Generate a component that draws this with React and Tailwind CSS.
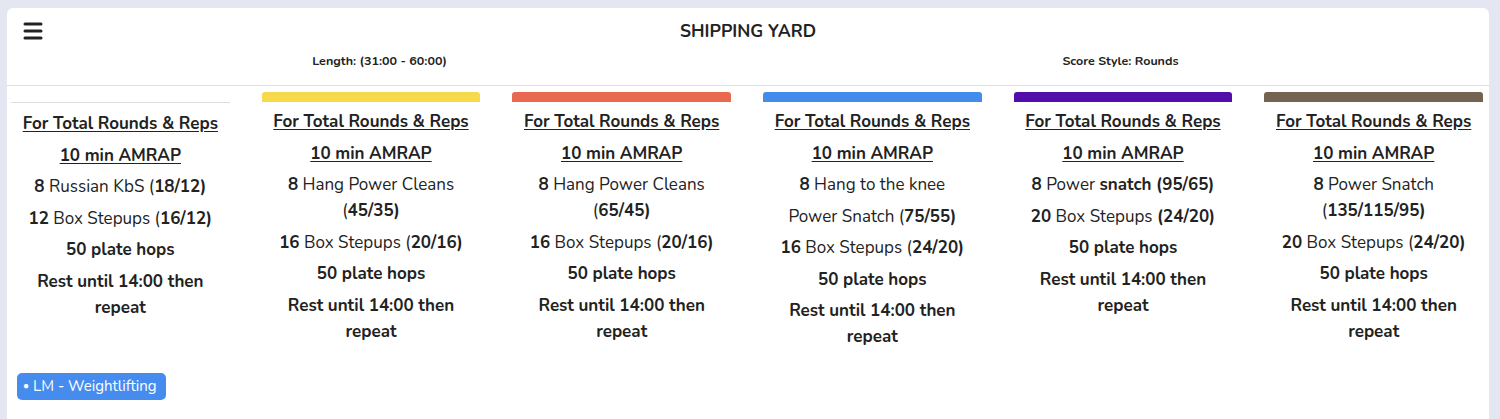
import { Menu } from "lucide-react";

const columns = [
  {
    bar: null,
    lines: [
      [[["8", true], [" Russian KbS (", false], ["18/12", true], [")", true]]],
      [[["12", true], [" Box Stepups (", false], ["16/12", true], [")", true]]],
      [[["50 plate hops", true]]],
      [[["Rest until 14:00 then repeat", true]]],
    ],
  },
  {
    bar: "bg-[#f7d94c]",
    lines: [
      [[["8", true], [" Hang Power Cleans (", false], ["45/35", true], [")", true]]],
      [[["16", true], [" Box Stepups (", false], ["20/16", true], [")", true]]],
      [[["50 plate hops", true]]],
      [[["Rest until 14:00 then repeat", true]]],
    ],
  },
  {
    bar: "bg-[#e8694f]",
    lines: [
      [[["8", true], [" Hang Power Cleans (", false], ["65/45", true], [")", true]]],
      [[["16", true], [" Box Stepups (", false], ["20/16", true], [")", true]]],
      [[["50 plate hops", true]]],
      [[["Rest until 14:00 then repeat", true]]],
    ],
  },
  {
    bar: "bg-[#428cec]",
    lines: [
      [[["8", true], [" Hang to the knee", false]]],
      [[[" Power Snatch (", false], ["75/55", true], [")", true]]],
      [[["16", true], [" Box Stepups (", false], ["24/20", true], [")", true]]],
      [[["50 plate hops", true]]],
      [[["Rest until 14:00 then repeat", true]]],
    ],
  },
  {
    bar: "bg-[#520dab]",
    lines: [
      [[["8", true], [" Power ", false], ["snatch (95/65)", true]]],
      [[["20", true], [" Box Stepups ", false], ["(24/20)", true]]],
      [[["50 plate hops", true]]],
      [[["Rest until 14:00 then repeat", true]]],
    ],
  },
  {
    bar: "bg-[#736350]",
    lines: [
      [[["8", true], [" Power Snatch (", false], ["135/115/95", true], [")", true]]],
      [[["20", true], [" Box Stepups (", false], ["24/20", true], [")", true]]],
      [[["50 plate hops", true]]],
      [[["Rest until 14:00 then repeat", true]]],
    ],
  },
];

function Column({ col }) {
  return (
    <div className="flex flex-col">
      {col.bar ? (
        <div className={`h-[10px] rounded-t-[3px] ${col.bar}`} />
      ) : (
        <div className="mt-[10px] h-px bg-[#dcdde3]" />
      )}
      <div className={`text-center text-[17px] leading-[26px] text-[#222] px-1 ${col.bar ? "pt-[7px]" : "pt-[8px]"}`}>
        <p className="font-bold underline underline-offset-2 mb-[5.5px]">For Total Rounds &amp; Reps</p>
        <p className="font-bold underline underline-offset-2 mb-[5.5px]">10 min AMRAP</p>
        {col.lines.map((line, i) => (
          <p key={i} className="mb-[5.5px]">
            {line[0].map(([t, b], j) => (
              <span key={j} className={b ? "font-bold" : "font-normal"}>
                {t}
              </span>
            ))}
          </p>
        ))}
      </div>
    </div>
  );
}

export default function App() {
  return (
    <div
      className="min-h-screen bg-[#e4e6f1] pt-2 pl-[7px] pr-[11px]"
      style={{ fontFamily: '"Nunito", "Open Sans", sans-serif' }}
    >
      <div className="bg-white rounded-t-[6px] min-h-[411px] flex flex-col">
        <header className="relative border-b border-[#dcdfe8]">
          <button className="absolute left-[14px] top-[11px] text-[#222]">
            <Menu size={24} strokeWidth={3} />
          </button>
          <h1 className="text-center font-bold text-[17.5px] text-[#222] pt-[12px] leading-[22px]">
            SHIPPING YARD
          </h1>
          <div className="grid grid-cols-2 pt-[11px] pb-[16px]">
            <p className="text-center font-bold text-[12.5px] leading-[16px] text-[#222] pl-1">
              Length: (31:00 - 60:00)
            </p>
            <p className="text-center font-bold text-[12.5px] leading-[16px] text-[#222] pl-1">
              Score Style: Rounds
            </p>
          </div>
        </header>
        <div className="grid grid-cols-6 gap-x-[32px] pl-[4px] pr-[6px] pt-[6px]">
          {columns.map((col, i) => (
            <Column key={i} col={col} />
          ))}
        </div>
        <div className="px-[10px] pt-[16px]">
          <span className="inline-flex h-[27px] items-center gap-[4px] rounded-[5px] bg-[#468cef] text-white text-[15px] pl-[6px] pr-[9px]">
            <span className="text-[10px]">●</span>LM - Weightlifting
          </span>
        </div>
      </div>
    </div>
  );
}
